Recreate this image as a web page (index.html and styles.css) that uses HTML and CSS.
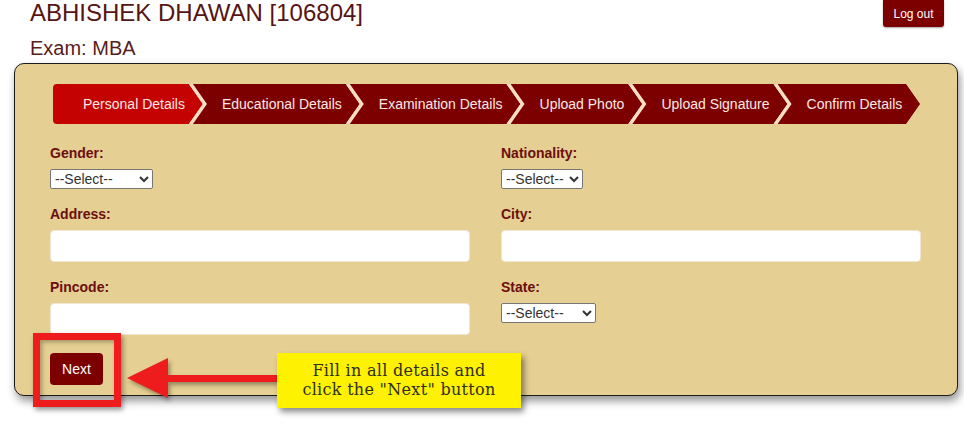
FILE: index.html
```html
<!DOCTYPE html>
<html lang="en">
<head>
<meta charset="utf-8">
<title>Personal Details</title>
<link rel="stylesheet" href="styles.css">
</head>
<body>
<header class="top">
  <div class="who">
    <h1 class="name">ABHISHEK DHAWAN [106804]</h1>
    <p class="exam">Exam: MBA</p>
  </div>
  <button class="logout" type="button">Log out</button>
</header>

<main class="panel">
  <nav class="steps">
    <div class="step first active"><span>Personal Details</span></div>
    <div class="step"><span>Educational Details</span></div>
    <div class="step"><span>Examination Details</span></div>
    <div class="step"><span>Upload Photo</span></div>
    <div class="step"><span>Upload Signature</span></div>
    <div class="step"><span>Confirm Details</span></div>
  </nav>

  <form class="form">
    <div class="grid">
      <div class="field">
        <label>Gender:</label>
        <select class="sel sel-gender"><option>--Select--</option></select>
      </div>
      <div class="field">
        <label>Nationality:</label>
        <select class="sel sel-nat"><option>--Select--</option></select>
      </div>
      <div class="field">
        <label>Address:</label>
        <input class="txt" type="text">
      </div>
      <div class="field">
        <label>City:</label>
        <input class="txt" type="text">
      </div>
      <div class="field">
        <label>Pincode:</label>
        <input class="txt" type="text">
      </div>
      <div class="field">
        <label>State:</label>
        <select class="sel sel-state"><option>--Select--</option></select>
      </div>
    </div>
    <button class="next" type="button">Next</button>
  </form>
</main>

<div class="mark-box"></div>
<svg class="mark-arrow" viewBox="120 350 165 55" width="165" height="55" aria-hidden="true">
  <polygon points="127,378 168,358 168,398" fill="#ee1c1c"/>
  <rect x="164" y="375" width="114" height="7" fill="#ee1c1c"/>
</svg>
<div class="callout"><span class="line">Fill in all details and</span><span class="line">click the "Next" button</span></div>
</body>
</html>
```

FILE: styles.css
```css
html, body {
  margin: 0;
  padding: 0;
  background: #ffffff;
}

body {
  font-family: "Liberation Sans", Arial, sans-serif;
  width: 964px;
  height: 429px;
  overflow: hidden;
  position: relative;
}

.top {
  display: flex;
  justify-content: space-between;
  align-items: flex-start;
  padding: 0 20px 0 30px;
}

.name {
  margin: 0;
  font-size: 24px;
  line-height: 26px;
  font-weight: normal;
  color: #561414;
}

.exam {
  margin: 10px 0 0;
  font-size: 20px;
  line-height: 24px;
  color: #5a1c1c;
}

.logout {
  width: 61px;
  height: 27px;
  border: none;
  border-radius: 0 0 3px 3px;
  background: #7c0000;
  color: #ffffff;
  font-family: "Liberation Sans", Arial, sans-serif;
  font-size: 12px;
  padding: 0;
  box-shadow: 0 1px 2px rgba(0, 0, 0, 0.35);
}

.panel {
  margin: 3px 6px 0 14px;
  border: 1px solid #1c1c1c;
  border-radius: 10px;
  background: #e5cf92;
  padding: 20px 36px 10px 35px;
  box-shadow: 2px 5px 8px rgba(0, 0, 0, 0.42);
}

/* step bar */
.steps {
  display: flex;
  height: 40px;
  margin-left: 3px;
}

.step {
  display: flex;
  height: 40px;
  margin-left: -14px;
  background: #f8dcc6;
  clip-path: polygon(0 0, calc(100% - 14px) 0, 100% 50%, calc(100% - 14px) 100%, 0 100%, 14px 50%);
}

.step span {
  display: flex;
  align-items: center;
  margin-left: 4px;
  padding: 0 18px 0 29px;
  background: #7d0000;
  color: #f8e8e4;
  font-size: 14px;
  white-space: nowrap;
  clip-path: polygon(0 0, calc(100% - 14px) 0, 100% 50%, calc(100% - 14px) 100%, 0 100%, 14px 50%);
}

.step.first {
  margin-left: 0;
  background: transparent;
  clip-path: polygon(0 0, calc(100% - 14px) 0, 100% 50%, calc(100% - 14px) 100%, 0 100%);
}

.step.first span {
  margin-left: 0;
  padding-left: 30px;
  border-radius: 4px 0 0 4px;
  clip-path: polygon(0 0, calc(100% - 14px) 0, 100% 50%, calc(100% - 14px) 100%, 0 100%);
}

.step.active span {
  background: #c40202;
}

/* form */
.grid {
  display: grid;
  grid-template-columns: 420px 420px;
  column-gap: 31px;
  row-gap: 17px;
  margin-top: 21px;
}

.field {
  display: flex;
  flex-direction: column;
  align-items: flex-start;
}

.field label {
  display: block;
  font-size: 14px;
  line-height: 16px;
  font-weight: bold;
  color: #6c0e0e;
  margin-bottom: 8px;
}

.sel {
  height: 20px;
  font-family: "Liberation Sans", Arial, sans-serif;
  font-size: 14px;
  color: #333333;
  background: #ffffff;
  border: 1px solid #767676;
  border-radius: 2px;
  padding: 0;
}

.sel-gender { width: 103px; }
.sel-nat { width: 82px; }
.sel-state { width: 95px; }

.txt {
  box-sizing: border-box;
  width: 100%;
  height: 32px;
  border: 1px solid #efe6d4;
  border-radius: 4px;
  background: #ffffff;
  font-family: "Liberation Sans", Arial, sans-serif;
  font-size: 14px;
}

.next {
  margin-top: 18px;
  width: 53px;
  height: 32px;
  border: none;
  border-radius: 4px;
  background: #7d0000;
  color: #ffffff;
  font-family: "Liberation Sans", Arial, sans-serif;
  font-size: 14px;
  padding: 0;
  display: block;
}

/* annotation overlay */
.mark-box {
  position: absolute;
  left: 33px;
  top: 333px;
  width: 88px;
  height: 74px;
  box-sizing: border-box;
  border: 7px solid #ee1c1c;
  box-shadow: 2px 3px 5px rgba(0, 0, 0, 0.4), inset 2px 2px 4px rgba(0, 0, 0, 0.3);
}

.mark-arrow {
  position: absolute;
  left: 120px;
  top: 350px;
  filter: drop-shadow(2px 3px 2px rgba(0, 0, 0, 0.35));
}

.callout {
  position: absolute;
  left: 277px;
  top: 353px;
  width: 244px;
  height: 55px;
  box-sizing: border-box;
  display: flex;
  flex-direction: column;
  align-items: center;
  justify-content: center;
  background: #fff200;
  color: #2e2e22;
  font-family: "DejaVu Serif", "Liberation Serif", serif;
  font-size: 16px;
  letter-spacing: 0.3px;
  box-shadow: 3px 4px 6px rgba(0, 0, 0, 0.45);
}

.callout .line {
  display: block;
  line-height: 18.7px;
  white-space: nowrap;
}
```
